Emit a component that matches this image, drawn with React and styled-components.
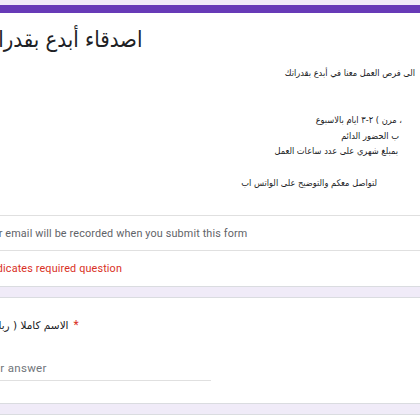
import React from 'react'
import styled, { createGlobalStyle } from 'styled-components'

const Global = createGlobalStyle`
  html, body {
    margin: 0;
    padding: 0;
    background: #f0ebf8;
    overflow: hidden;
  }
`

const Page = styled.div`
  width: 420px;
  height: 420px;
  overflow: hidden;
  padding-top: 5px;
  box-sizing: border-box;
`

const Card = styled.div`
  margin-left: -49px;
  width: 520px;
  box-sizing: border-box;
  background: #fff;
  border: 1px solid #dadce0;
  border-top: ${p => (p.$accent ? '8px solid #673ab7' : '1px solid #dadce0')};
  margin-bottom: ${p => p.$gap || 10}px;
`

const Section = styled.div`
  padding: ${p => p.$pad || '0 24px'};
  border-top: ${p => (p.$divided ? '1px solid #e0e0e0' : 'none')};
  height: ${p => p.$h}px;
  box-sizing: border-box;
  display: flex;
  flex-direction: column;
  justify-content: ${p => p.$center ? 'center' : 'flex-start'};
`

const arabic = `"DejaVu Sans Condensed", "DejaVu Sans", sans-serif`

const Title = styled.div`
  font-family: ${arabic};
  font-stretch: condensed;
  font-size: 22px;
  line-height: 32px;
  color: #202124;
  white-space: nowrap;
  direction: ltr;
`

const Desc = styled.div`
  margin-top: 9px;
  display: flex;
  flex-direction: column;
  direction: rtl;
`

const Line = styled.div`
  font-family: ${arabic};
  font-stretch: condensed;
  font-size: 9.2px;
  line-height: 15.7px;
  height: 15.7px;
  color: #202124;
  white-space: nowrap;
  padding-right: ${p => p.$inset || 0}px;
`

const Note = styled.div`
  font-family: Roboto, "Liberation Sans", sans-serif;
  font-size: 10.8px;
  letter-spacing: 0.15px;
  color: ${p => (p.$red ? '#d93025' : '#5f6368')};
  white-space: nowrap;
`

const Question = styled.div`
  font-family: "DejaVu Sans", sans-serif;
  font-size: 10.5px;
  line-height: 16px;
  color: #202124;
  white-space: nowrap;
  display: flex;
  gap: 5px;
  align-items: center;
`

const Star = styled.span`
  color: #d93025;
  font-family: Roboto, sans-serif;
  font-size: 12px;
`

const Answer = styled.div`
  margin-top: 28px;
  width: 231px;
  border-bottom: 1px solid #e0e0e0;
  padding: 0 0 5px 4px;
  font-family: Roboto, "Liberation Sans", sans-serif;
  font-size: 11.5px;
  letter-spacing: 0.3px;
  color: #70757a;
`

const descLines = [
  { text: 'الى فرص العمل معنا في أبدع بقدراتك', inset: 31 },
  { text: '', inset: 0 },
  { text: '', inset: 0 },
  { text: '، مرن ) ٢-٣ ايام بالاسبوع', inset: 44 },
  { text: 'ب الحضور الدائم', inset: 47 },
  { text: 'بمبلغ شهري على عدد ساعات العمل', inset: 48 },
  { text: '', inset: 0 },
  { text: 'لتواصل معكم والتوضيح على الواتس اب', inset: 69 },
]

export default function App() {
  return (
    <Page>
      <Global />
      <Card $accent>
        <Section $h={202} $pad="11px 24px 0">
          <Title>اصدقاء أبدع بقدراتك</Title>
          <Desc>
            {descLines.map((l, i) => (
              <Line key={i} $inset={l.inset}>{l.text || '\u00a0'}</Line>
            ))}
          </Desc>
        </Section>
        <Section $divided $center $h={35} $pad="0 24px 0 28px">
          <Note>Your email will be recorded when you submit this form</Note>
        </Section>
        <Section $divided $center $h={36} $pad="0 24px 0 28px">
          <Note $red>* Indicates required question</Note>
        </Section>
      </Card>
      <Card>
        <Section $h={105} $pad="19px 24px 0">
          <Question>
            <span>الاسم كاملا ( رباعي )</span>
            <Star>*</Star>
          </Question>
          <Answer>Your answer</Answer>
        </Section>
      </Card>
      <Card>
        <Section $h={40} />
      </Card>
    </Page>
  )
}
